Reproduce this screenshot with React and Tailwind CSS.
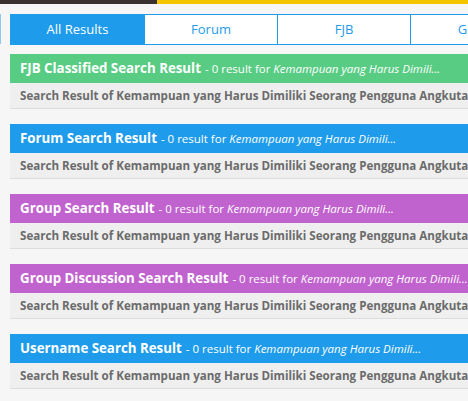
export default function App() {
  const q = "Kemampuan yang Harus Dimili...";
  const sections = [
    ["FJB Classified Search Result", "bg-[#58cc83]"],
    ["Forum Search Result", "bg-[#1e9beb]"],
    ["Group Search Result", "bg-[#c163ce]"],
    ["Group Discussion Search Result", "bg-[#c163ce]"],
    ["Username Search Result", "bg-[#1e9beb]"],
  ];
  return (
    <div className="w-[468px] h-[401px] overflow-hidden bg-[#f6f6f6] relative" style={{ fontFamily: '"Open Sans", sans-serif' }}>
      <div className="flex h-[4px]">
        <div className="w-[157px] bg-[#3a3030]" />
        <div className="flex-1 bg-[#f5c400]" />
      </div>
      <div className="absolute left-0 top-[14px] w-[1px] h-[30px] bg-[#8cc8f0]" />
      <div className="pl-[10px] pt-[10px]">
        <div className="flex w-[540px] h-[31px] border border-[#1e9beb] text-[13px]">
          <div className="w-[133px] bg-[#1e9beb] text-white flex items-center justify-center">All Results</div>
          <div className="w-[133px] bg-white text-[#1e9beb] border-l border-[#1e9beb] flex items-center justify-center">Forum</div>
          <div className="w-[133px] bg-white text-[#1e9beb] border-l border-[#1e9beb] flex items-center justify-center">FJB</div>
          <div className="w-[133px] bg-white text-[#1e9beb] border-l border-[#1e9beb] flex items-center justify-center">Group</div>
        </div>
        <div className="flex flex-col gap-[15px] mt-[9px]">
          {sections.map(([t, c]) => (
            <div key={t} className="w-[480px]">
              <div className={`${c} h-[29px] flex items-center px-[10px] text-white whitespace-nowrap overflow-hidden`}>
                <span className="text-[13.3px] font-bold">{t}</span>
                <span className="text-[11.5px] ml-[4px]">- 0 result for <i>{q}</i></span>
              </div>
              <div className="h-[26px] bg-[#efefef] border-b border-[#dcdcdc] flex items-center px-[10px] text-[11.6px] font-bold text-[#6b6b6b] whitespace-nowrap overflow-hidden">
                Search Result of Kemampuan yang Harus Dimiliki Seorang Pengguna Angkutan Umum
              </div>
            </div>
          ))}
        </div>
      </div>
    </div>
  );
}
